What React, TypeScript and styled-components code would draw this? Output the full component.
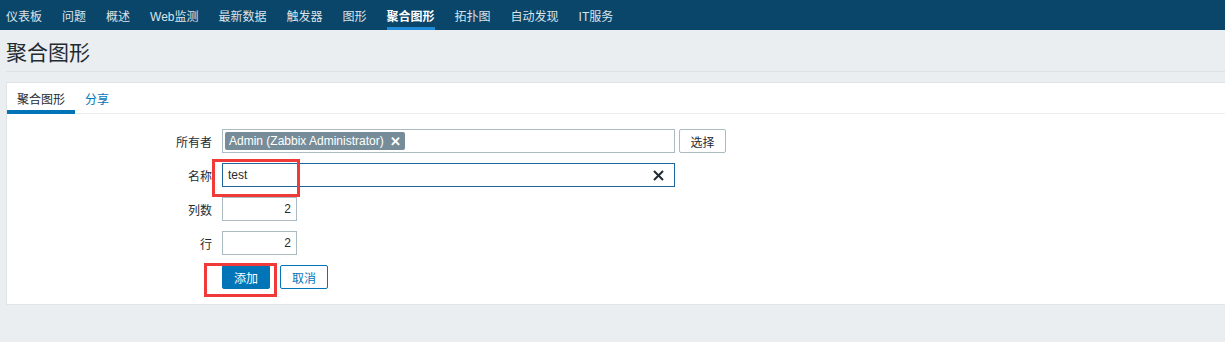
import React from "react";
import styled, { createGlobalStyle } from "styled-components";

const GlobalStyle = createGlobalStyle`
  html, body {
    margin: 0;
    padding: 0;
    background: #ebeef0;
    overflow: hidden;
  }
  body {
    font-family: "Liberation Sans", Arial, "Noto Sans CJK SC", sans-serif;
    font-size: 12px;
    color: #1f2c33;
  }
  * { box-sizing: border-box; }
`;

const Page = styled.div`
  width: 1225px;
  height: 342px;
  background: #ebeef0;
`;

const TopNav = styled.nav`
  height: 30px;
  background: #0a466a;
  display: flex;
  align-items: stretch;
  gap: 20px;
  padding-left: 6px;
`;

const NavItem = styled.a<{ $active?: boolean }>`
  display: flex;
  align-items: center;
  padding-top: 3px;
  border-bottom: 3px solid ${(p) => (p.$active ? "#1f8ad6" : "transparent")};
  color: ${(p) => (p.$active ? "#ffffff" : "#dbe3e8")};
  font-weight: ${(p) => (p.$active ? "bold" : "normal")};
  font-size: 12px;
  white-space: nowrap;
  text-decoration: none;
  cursor: pointer;
`;

const Header = styled.header`
  margin: 0 0 0 6px;
  padding: 11px 0 6px;
  border-bottom: 1px solid #dde2e6;
`;

const Title = styled.h1`
  margin: 0;
  font-size: 21px;
  line-height: 24px;
  font-weight: normal;
  color: #1f2c33;
`;

const Panel = styled.section`
  margin: 10px -2px 0 6px;
  background: #ffffff;
  border: 1px solid #dfe4e7;
  padding-bottom: 15px;
`;

const TabList = styled.div`
  display: flex;
  height: 31px;
  border-bottom: 1px solid #ebeef0;
`;

const Tab = styled.a<{ $active?: boolean }>`
  display: flex;
  align-items: center;
  height: 31px;
  padding: 3px 10px 0;
  border-bottom: 4px solid ${(p) => (p.$active ? "#0275b8" : "transparent")};
  color: ${(p) => (p.$active ? "#1f2c33" : "#0275b8")};
  font-size: 12px;
  cursor: pointer;
`;

const Form = styled.div`
  display: grid;
  grid-template-columns: 205px auto;
  column-gap: 10px;
  row-gap: 10px;
  align-items: center;
  padding-top: 15px;
`;

const Label = styled.label`
  text-align: right;
  font-size: 12px;
  color: #1f2c33;
`;

const FieldRow = styled.div`
  display: flex;
  align-items: center;
  gap: 4px;
`;

const MultiSelect = styled.div`
  width: 453px;
  height: 24px;
  border: 1px solid #acbbc2;
  background: #fff;
  padding: 2px;
  display: flex;
  align-items: flex-start;
`;

const Tag = styled.span`
  display: inline-flex;
  align-items: center;
  gap: 6px;
  height: 18px;
  padding: 0 4px;
  background: #768d99;
  color: #ffffff;
  border-radius: 2px;
  font-size: 12px;
  white-space: nowrap;
`;

const TagRemove = styled.span`
  font-weight: bold;
  font-size: 13px;
  line-height: 1;
`;

const GreyButton = styled.button`
  height: 24px;
  width: 47px;
  border: 1px solid #acbbc2;
  background: #ffffff;
  color: #1f2c33;
  border-radius: 2px;
  font-family: inherit;
  font-size: 12px;
  padding: 0;
`;

const Annotated = styled.div`
  position: relative;
  width: fit-content;
`;

const RedBox = styled.div<{ $l: number; $t: number; $w: number; $h: number }>`
  position: absolute;
  left: ${(p) => p.$l}px;
  top: ${(p) => p.$t}px;
  width: ${(p) => p.$w}px;
  height: ${(p) => p.$h}px;
  border: 3px solid #f03a3a;
  pointer-events: none;
`;

const TextBox = styled.div`
  width: 453px;
  height: 24px;
  border: 1px solid #1f65a0;
  background: #fff;
  display: flex;
  align-items: center;
  justify-content: space-between;
  padding: 0 10px 0 5px;
  font-size: 12px;
  color: #1f2c33;
`;

const NumberBox = styled.div`
  width: 75px;
  height: 24px;
  border: 1px solid #acbbc2;
  background: #fff;
  display: flex;
  align-items: center;
  justify-content: flex-end;
  padding-right: 5px;
  font-size: 12px;
  color: #1f2c33;
`;

const Buttons = styled.div`
  display: flex;
  gap: 10px;
`;

const Button = styled.button<{ $primary?: boolean }>`
  width: 48px;
  height: 24px;
  border-radius: 2px;
  border: 1px solid #0275b8;
  background: ${(p) => (p.$primary ? "#0275b8" : "#ffffff")};
  color: ${(p) => (p.$primary ? "#ffffff" : "#0275b8")};
  font-family: inherit;
  font-size: 12px;
  padding: 0;
`;

const Empty = styled.div``;

const ClearIcon = () => (
  <svg width="11" height="11" viewBox="0 0 11 11">
    <path d="M1 1 L10 10 M10 1 L1 10" stroke="#1f2c33" strokeWidth="2" />
  </svg>
);

const navItems = [
  "仪表板",
  "问题",
  "概述",
  "Web监测",
  "最新数据",
  "触发器",
  "图形",
  "聚合图形",
  "拓扑图",
  "自动发现",
  "IT服务",
];

export default function App() {
  return (
    <Page>
      <GlobalStyle />
      <TopNav>
        {navItems.map((n) => (
          <NavItem key={n} $active={n === "聚合图形"}>
            {n}
          </NavItem>
        ))}
      </TopNav>
      <Header>
        <Title>聚合图形</Title>
      </Header>
      <Panel>
        <TabList>
          <Tab $active>聚合图形</Tab>
          <Tab>分享</Tab>
        </TabList>
        <Form>
          <Label>所有者</Label>
          <FieldRow>
            <MultiSelect>
              <Tag>
                Admin (Zabbix Administrator)
                <TagRemove>✕</TagRemove>
              </Tag>
            </MultiSelect>
            <GreyButton>选择</GreyButton>
          </FieldRow>

          <Label>名称</Label>
          <Annotated>
            <TextBox>
              <span>test</span>
              <ClearIcon />
            </TextBox>
            <RedBox $l={-10} $t={-4} $w={88} $h={38} />
          </Annotated>

          <Label>列数</Label>
          <NumberBox>2</NumberBox>

          <Label>行</Label>
          <NumberBox>2</NumberBox>

          <Empty />
          <Buttons>
            <Annotated>
              <Button $primary>添加</Button>
              <RedBox $l={-18} $t={-2} $w={73} $h={34} />
            </Annotated>
            <Button>取消</Button>
          </Buttons>
        </Form>
      </Panel>
    </Page>
  );
}
